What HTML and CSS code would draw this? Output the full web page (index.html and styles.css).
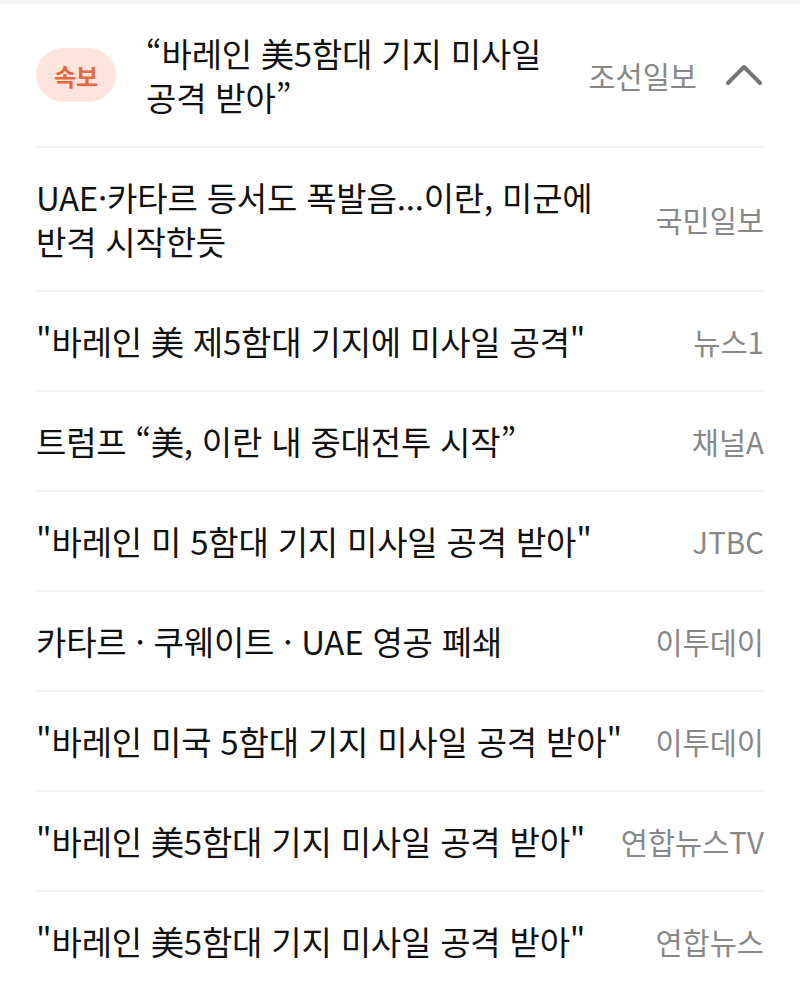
FILE: index.html
```html
<!DOCTYPE html>
<html lang="ko">
<head>
<meta charset="utf-8">
<link rel="stylesheet" href="styles.css">
</head>
<body>
<div class="topbar"></div>
<ul class="news">
  <li class="row breaking">
    <span class="badge">속보</span>
    <span class="title">“바레인 美5함대 기지 미사일<br>공격 받아”</span>
    <span class="source">조선일보</span>
    <svg class="chev" width="36" height="24" viewBox="0 0 36 24"><polyline points="2,20 18,4 34,20" fill="none" stroke="#777" stroke-width="4" stroke-linecap="round" stroke-linejoin="round"/></svg>
  </li>
  <li class="row"><span class="title">UAE·카타르 등서도 폭발음...이란, 미군에<br>반격 시작한듯</span><span class="source">국민일보</span></li>
  <li class="row"><span class="title">"바레인 美 제5함대 기지에 미사일 공격"</span><span class="source">뉴스1</span></li>
  <li class="row"><span class="title">트럼프 “美, 이란 내 중대전투 시작”</span><span class="source">채널A</span></li>
  <li class="row"><span class="title">"바레인 미 5함대 기지 미사일 공격 받아"</span><span class="source">JTBC</span></li>
  <li class="row"><span class="title">카타르 · 쿠웨이트 · UAE 영공 폐쇄</span><span class="source">이투데이</span></li>
  <li class="row"><span class="title">"바레인 미국 5함대 기지 미사일 공격 받아"</span><span class="source">이투데이</span></li>
  <li class="row"><span class="title">"바레인 美5함대 기지 미사일 공격 받아"</span><span class="source">연합뉴스TV</span></li>
  <li class="row last"><span class="title">"바레인 美5함대 기지 미사일 공격 받아"</span><span class="source">연합뉴스</span></li>
</ul>
</body>
</html>
```
FILE: styles.css
```css
html, body {
  margin: 0;
  padding: 0;
  background: #ffffff;
}
body {
  font-family: "Noto Sans CJK KR", "Noto Sans", sans-serif;
  color: #111111;
}
.topbar {
  height: 4px;
  background: #f4f4f6;
}
.news {
  list-style: none;
  margin: 0;
  padding: 0 36px;
}
.row {
  display: flex;
  align-items: center;
  gap: 30px;
  padding: 27px 0;
  border-bottom: 2px solid #f3f3f3;
}
.row.last {
  border-bottom: none;
}
.row.breaking {
  gap: 0;
}
.title {
  flex: 1;
  font-size: 33px;
  line-height: 44px;
  letter-spacing: -0.2px;
  white-space: nowrap;
}
.source {
  flex-shrink: 0;
  font-size: 29.5px;
  line-height: 44px;
  color: #888888;
}
.badge {
  flex-shrink: 0;
  width: 80px;
  height: 54px;
  border-radius: 27px;
  background: #fde5dd;
  color: #e2683f;
  font-size: 24px;
  font-weight: 700;
  display: flex;
  align-items: center;
  justify-content: center;
  margin-right: 30px;
}
.breaking .source {
  margin-left: 30px;
}
.chev {
  flex-shrink: 0;
  margin-left: 29px;
  margin-right: 2px;
}
```
